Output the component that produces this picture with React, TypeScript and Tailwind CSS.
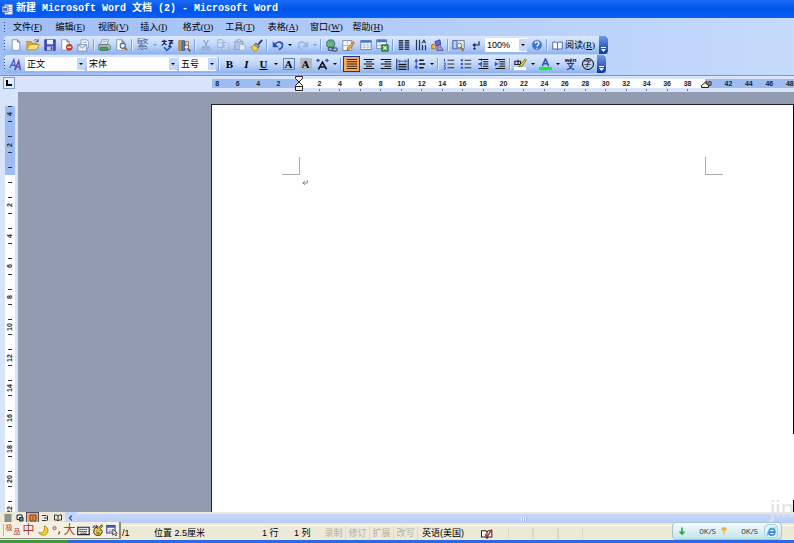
import type { ReactNode } from "react";

const MENUS = [
  ["文件", "F"],
  ["编辑", "E"],
  ["视图", "V"],
  ["插入", "I"],
  ["格式", "O"],
  ["工具", "T"],
  ["表格", "A"],
  ["窗口", "W"],
  ["帮助", "H"],
];

// One entry per two ruler units; the blank one is the margin origin.
const RULER_X = ["8", "6", "4", "2", "", ...Array.from({ length: 24 }, (_, i) => String((i + 1) * 2))];
const RULER_Y = ["4", "2", "", ...Array.from({ length: 11 }, (_, i) => String((i + 1) * 2))];

const NAVY = "#1d2f6b";

function Svg({ children, className = "size-3" }: { children: ReactNode; className?: string }) {
  return (
    <svg viewBox="0 0 16 16" className={`shrink-0 ${className}`} fill="none" aria-hidden>
      {children}
    </svg>
  );
}

function Tool({ label, active, children }: { label: string; active?: boolean; children: ReactNode }) {
  return (
    <button
      type="button"
      aria-label={label}
      className={`flex h-4 w-[17px] shrink-0 items-center justify-center ${
        active ? "border border-[#1a3a8c] bg-[#f8a860]" : ""
      }`}
    >
      {children}
    </button>
  );
}

function Drop({ label, muted }: { label: string; muted?: boolean }) {
  return (
    <button type="button" aria-label={label} className="flex h-4 w-2 shrink-0 items-center justify-center">
      <svg viewBox="0 0 4 2" className="h-[2px] w-1" aria-hidden>
        <path d="M0 0h4L2 2z" fill={muted ? "#7f97c4" : "#000"} />
      </svg>
    </button>
  );
}

function Sep() {
  return (
    <span className="flex h-3 w-1 shrink-0 justify-center">
      <span className="w-px bg-[#7e9fdc]" />
      <span className="w-px bg-[#e4eefe]" />
    </span>
  );
}

function Combo({ label, value, width }: { label: string; value: string; width: string }) {
  return (
    <label className={`relative flex h-[14px] shrink-0 px-px ${width}`}>
      <select
        aria-label={label}
        className="w-full appearance-none bg-white pl-[2px] text-[9px] leading-[14px] text-black outline-none"
      >
        <option>{value}</option>
      </select>
      <span className="pointer-events-none absolute inset-y-px right-px flex w-2 items-center justify-center bg-[#c3d8fa]">
        <svg viewBox="0 0 4 2" className="h-[2px] w-1" aria-hidden>
          <path d="M0 0h4L2 2z" fill="#000" />
        </svg>
      </span>
    </label>
  );
}

function Grip() {
  return (
    <span className="flex w-[3px] shrink-0 flex-col items-start gap-[2px]">
      <i className="size-px bg-[#27418c]" />
      <i className="size-px bg-[#27418c]" />
      <i className="size-px bg-[#27418c]" />
      <i className="size-px bg-[#27418c]" />
    </span>
  );
}

function Toolbar({ children, label }: { children: ReactNode; label: string }) {
  return (
    <div
      role="toolbar"
      aria-label={label}
      className="ml-1 flex h-[18px] w-fit items-center rounded-l-sm bg-linear-to-b from-[#dbe9fe] via-[#c0d6fa] to-[#8fb2ec]"
    >
      {children}
      <button
        type="button"
        aria-label="工具栏选项"
        className="ml-px flex h-[18px] w-[9px] items-end justify-center rounded-r-sm bg-linear-to-b from-[#6f9be8] to-[#0a379c] pb-[2px]"
      >
        <svg viewBox="0 0 5 5" className="size-[5px]" aria-hidden>
          <path d="M0 .5h5" stroke="#fff" />
          <path d="M0 2h5L2.500 5z" fill="#fff" />
        </svg>
      </button>
    </div>
  );
}

function Sheet({ x = 0, fold = true }: { x?: number; fold?: boolean }) {
  return (
    <g transform={`translate(${x} 0)`}>
      <path d="M3 1h7l3 3v11H3z" fill="#fff" stroke="#6f80a8" />
      {fold && <path d="M10 1v3h3" stroke="#3c4f86" />}
    </g>
  );
}

// Rows of horizontal rules, [x1, x2] per row from the top.
function Lines({ rows, color = "#111" }: { rows: [number, number][]; color?: string }) {
  return (
    <path
      d={rows.map(([a, b], i) => `M${a} ${2 + i * 3}H${b}`).join("")}
      stroke={color}
      strokeWidth="1.6"
    />
  );
}

function Magnifier({ color = "#4a6086" }: { color?: string }) {
  return (
    <>
      <circle cx="9" cy="9" r="3.500" fill="#dbeefc" stroke={color} strokeWidth="1.400" />
      <path d="M11.500 11.500L15 15" stroke="#a8681a" strokeWidth="2.200" />
    </>
  );
}

function Key({ k }: { k: string }) {
  return (
    <span className="font-['Liberation_Serif',serif]">
      (<u>{k}</u>)
    </span>
  );
}

function StandardBar() {
  return (
    <Toolbar label="常用">
      <Grip />
      <Tool label="新建">
        <Svg><Sheet /></Svg>
      </Tool>
      <Tool label="打开">
        <Svg className="size-[14px]">
          <path d="M1 13V4h5l1 2h6v7z" fill="#e3a92c" stroke="#b8892a" />
          <path d="M1 13.500l3-6h11l-3 6z" fill="#ffe07a" stroke="#c4962a" />
          <path d="M9 3c2-2 4-1 5 1m0-3v3h-3" stroke="#555" />
        </Svg>
      </Tool>
      <Tool label="保存">
        <Svg>
          <path d="M1 1h14v14H1z" fill="#4a4fc0" stroke="#25257c" />
          <path d="M4 1h8v6H4z" fill="#eef3ff" />
          <path d="M4 10h8v5H4z" fill="#c5cbe8" />
          <path d="M9 11h2v3H9z" fill="#25257c" />
        </Svg>
      </Tool>
      <Tool label="权限">
        <Svg>
          <Sheet x={-2} />
          <circle cx="11" cy="11" r="4" fill="#dc4426" stroke="#a32913" />
          <path d="M8.500 11h5" stroke="#fff" strokeWidth="1.800" />
        </Svg>
      </Tool>
      <Tool label="电子邮件">
        <Svg className="size-[13px]">
          <path d="M5 1h7l2 2v8H5z" fill="#fff" stroke="#8290b2" />
          <path d="M1 7h11v8H1z" fill="#e7ebf5" stroke="#7482a8" />
          <path d="M1 7l5.500 4L12 7M7 4h5" stroke="#7482a8" />
        </Svg>
      </Tool>
      <Sep />
      <Tool label="打印">
        <Svg className="size-[13px]">
          <path d="M5 1h8l-2 6H3z" fill="#fff" stroke="#7584a4" />
          <path d="M1 7h13l1 2v4H1z" fill="#b8c8c4" stroke="#4c6b68" />
          <path d="M3 10h9v4H3z" fill="#4f9e5a" stroke="#3c6c50" />
          <path d="M6 3h5M5 5h5" stroke="#9aa8c0" />
        </Svg>
      </Tool>
      <Tool label="打印预览">
        <Svg><Sheet x={-2} /><Magnifier /></Svg>
      </Tool>
      <Sep />
      <Tool label="中文简繁转换">
        <span className="text-[12px] leading-[18px] text-[#5e7396]">繁</span>
      </Tool>
      <Drop label="简繁选项" muted />
      <Tool label="拼写和语法">
        <Svg className="size-[13px]">
          <path d="M1 3h6M4 1v3c0 2-1 3-3 4M4 5c1 1 2 2 3 2M9 2h5l-3 3h4M11 5v4H9" stroke="#15205a" strokeWidth="1.500" />
          <path d="M4 10l3 4 6-5" stroke="#2d55c8" strokeWidth="2" />
        </Svg>
      </Tool>
      <Tool label="信息检索">
        <Svg className="size-[13px]">
          <path d="M1 2h3v12H1z" fill="#d8a63c" stroke="#8a6a2c" />
          <path d="M5 2h3v12H5z" fill="#5f73c6" stroke="#3d4c94" />
          <path d="M9 3h4v7H9z" fill="#f3d88a" stroke="#94763a" />
          <circle cx="10.500" cy="10" r="2.500" fill="#e8f4ff" stroke="#555f80" />
          <path d="M12.500 12L15 15" stroke="#6e4a18" strokeWidth="2" />
        </Svg>
      </Tool>
      <Sep />
      <Tool label="剪切">
        <Svg>
          <path d="M5 1l4 9M11 1L7 10" stroke="#8fa3c8" strokeWidth="1.400" />
          <circle cx="5" cy="12.500" r="2" stroke="#8fa3c8" strokeWidth="1.400" />
          <circle cx="11" cy="12.500" r="2" stroke="#8fa3c8" strokeWidth="1.400" />
        </Svg>
      </Tool>
      <Tool label="复制">
        <Svg>
          <path d="M1 1h6l2 2v8H1zM7 5h6l2 2v8H7z" fill="#d5e2f8" stroke="#8fa3c8" />
          <path d="M9 9h4M9 12h4M3 5h3" stroke="#8fa3c8" />
        </Svg>
      </Tool>
      <Tool label="粘贴">
        <Svg>
          <path d="M1 3h11v11H1z" fill="#b4c5e6" stroke="#8195bd" />
          <path d="M4 1h5v3H4z" fill="#d5e2f8" stroke="#8195bd" />
          <path d="M7 7h6l2 2v6H7z" fill="#e2ebfb" stroke="#8fa3c8" />
        </Svg>
      </Tool>
      <Tool label="格式刷">
        <Svg className="size-[13px]">
          <path d="M15 1l-5 6" stroke="#2f3f80" strokeWidth="2.500" />
          <path d="M7 5l5 4-2 2-5-4z" fill="#8d99b8" stroke="#525c80" />
          <path d="M5 7l5 4c-1 3-3 4-5 4l-4-5c2 0 3-1 4-3z" fill="#f5d435" stroke="#a38212" />
        </Svg>
      </Tool>
      <Sep />
      <Tool label="撤消">
        <Svg>
          <path d="M4 7c4-5 10-3 10 1 0 3-2 5-5 6" stroke="#2d50b8" strokeWidth="2.200" />
          <path d="M1 3v8h8z" fill="#2d50b8" />
        </Svg>
      </Tool>
      <Drop label="撤消列表" />
      <Tool label="恢复">
        <Svg>
          <path d="M12 7C8 2 2 4 2 8c0 3 2 5 5 6" stroke="#9db3dc" strokeWidth="2" />
          <path d="M15 3v8H7z" fill="#9db3dc" />
        </Svg>
      </Tool>
      <Drop label="恢复列表" muted />
      <Sep />
      <Tool label="插入超链接">
        <Svg className="size-[13px]">
          <circle cx="7" cy="6" r="5" fill="#58a9a0" stroke="#2c6670" />
          <path d="M4 3c2 0 2 2 4 2s2 3 0 4-4-1-5-2" fill="#77c04a" />
          <rect x="4" y="10" width="6" height="4" rx="2" stroke="#4a5674" strokeWidth="1.500" />
          <rect x="9" y="11" width="6" height="4" rx="2" stroke="#4a5674" strokeWidth="1.500" />
        </Svg>
      </Tool>
      <Tool label="表格和边框">
        <Svg className="size-[13px]">
          <path d="M1 2h11v12H1z" fill="#fff" stroke="#6276a8" />
          <path d="M1 8h11M6.500 2v12" stroke="#a3b2d2" />
          <path d="M14 3l-7 8-1 3 3-1 6-8z" fill="#f3b93c" stroke="#9c6316" />
        </Svg>
      </Tool>
      <Tool label="插入表格">
        <Svg>
          <path d="M1 2h14v12H1z" fill="#fff" stroke="#4a66a8" />
          <path d="M1 2h14v3H1z" fill="#4a76c8" />
          <path d="M1 8h14M1 11h14M5.500 5v9M10.500 5v9" stroke="#9fb5dc" />
        </Svg>
      </Tool>
      <Tool label="插入 Excel 工作表">
        <Svg className="size-[13px]">
          <path d="M1 1h12v11H1z" fill="#fff" stroke="#4a66a8" />
          <path d="M1 1h12v3H1z" fill="#4a76c8" />
          <path d="M1 8h7M5 4v8" stroke="#9fb5dc" />
          <path d="M7 7h8v8H7z" fill="#3d9b3f" stroke="#1f6d2a" />
          <path d="M9 9l4 4m0-4l-4 4" stroke="#fff" strokeWidth="1.500" />
        </Svg>
      </Tool>
      <Sep />
      <Tool label="分栏">
        <Svg>
          <path d="M1 2h6v12H1zM9 2h6v12H9z" fill="#7c8cae" />
          <Lines rows={[[1, 7], [1, 7], [1, 7], [1, 7], [1, 7]]} color="#26324e" />
          <Lines rows={[[9, 15], [9, 15], [9, 15], [9, 15], [9, 15]]} color="#26324e" />
        </Svg>
      </Tool>
      <Tool label="更改文字方向">
        <Svg>
          <path d="M2 1v14M6 1v14M10 8v7M14 8v7" stroke="#24345e" strokeWidth="1.600" />
          <path d="M9 6l3-5 2 5M10 4h4" stroke="#24345e" strokeWidth="1.300" />
        </Svg>
      </Tool>
      <Tool label="绘图">
        <Svg className="size-[13px]">
          <path d="M5 3l6-2 1 6-6 2z" fill="#5c74d8" stroke="#2f3f96" />
          <path d="M1 7l5-1v6H1z" fill="#f3b650" stroke="#9a6520" />
          <path d="M7 14l3-8 5 8z" fill="#a89ad8" stroke="#544a94" />
        </Svg>
      </Tool>
      <Sep />
      <Tool label="文档结构图">
        <Svg className="size-[13px]">
          <path d="M1 2h14v10H1z" fill="#f4f0c8" stroke="#4a66a8" />
          <path d="M1 2h5v10H1z" fill="#b6c9ef" stroke="#4a66a8" />
          <circle cx="9" cy="8" r="3" fill="#dbeefc" stroke="#4a6086" />
          <path d="M11 10l3 5" stroke="#a8681a" strokeWidth="2" />
        </Svg>
      </Tool>
      <Tool label="显示编辑标记">
        <Svg>
          <path d="M12 3v5H6" stroke="#1b2547" strokeWidth="1.600" />
          <path d="M7 5v6L3 8z" fill="#1b2547" />
          <path d="M6 11v3M4 13h4" stroke="#1b2547" strokeWidth="1.200" />
        </Svg>
      </Tool>
      <Combo label="显示比例" value="100%" width="w-11" />
      <Tool label="帮助">
        <Svg>
          <circle cx="8" cy="8" r="7" fill="#3c74d8" stroke="#a9c7f6" />
          <path d="M5.500 6c0-3 5-3 5 0 0 2-2.500 2-2.500 4M8 11.500v1.500" stroke="#fff" strokeWidth="1.800" />
        </Svg>
      </Tool>
      <Sep />
      <button type="button" className="flex h-4 w-[49px] items-center gap-[2px] pl-[3px] whitespace-nowrap">
        <Svg className="size-[11px]">
          <path d="M1 3h5l2 1 2-1h5v10h-5l-2 1-2-1H1zM8 4v10" fill="#f2f6ff" stroke="#4a5f92" strokeWidth="1.300" />
        </Svg>
        <span className="leading-4">
          阅读<Key k="R" />
        </span>
      </button>
    </Toolbar>
  );
}

function FormattingBar() {
  return (
    <Toolbar label="格式">
      <Grip />
      <Tool label="格式窗格">
        <Svg className="size-[13px]">
          <path d="M1 12L6 2l2 10M3 9h5" stroke="#4a63bc" strokeWidth="1.700" />
          <path d="M7 15l5-11 2 11M9 11h5" stroke="#6b4ca8" strokeWidth="2" />
        </Svg>
      </Tool>
      <Combo label="样式" value="正文" width="w-[62px]" />
      <Combo label="字体" value="宋体" width="w-[92px]" />
      <Combo label="字号" value="五号" width="w-[39px]" />
      <Sep />
      <Tool label="加粗">
        <b className="font-['Liberation_Serif',serif] text-[11px] leading-4">B</b>
      </Tool>
      <Tool label="倾斜">
        <b className="font-['Liberation_Serif',serif] text-[11px] leading-4 italic">I</b>
      </Tool>
      <Tool label="下划线">
        <b className="font-['Liberation_Serif',serif] text-[11px] leading-4 underline">U</b>
      </Tool>
      <Drop label="下划线样式" />
      <Tool label="字符边框">
        <b className="size-3 border border-[#6f84b4] text-center font-['Liberation_Serif',serif] text-[11px] leading-[10px]">A</b>
      </Tool>
      <Tool label="字符底纹">
        <b className="size-3 bg-[#b3b7bf] text-center font-['Liberation_Serif',serif] text-[11px] leading-3">A</b>
      </Tool>
      <Tool label="字符缩放">
        <Svg className="size-[13px]">
          <path d="M3 14L8 5l5 9M4 11h8" stroke="#111" strokeWidth="2" />
          <path d="M1 3h4M11 3h4M3 1L1 3l2 2M13 1l2 2-2 2" stroke="#2d55c8" strokeWidth="1.400" />
        </Svg>
      </Tool>
      <Drop label="缩放比例" />
      <Sep />
      <Tool label="两端对齐" active>
        <Svg><Lines rows={[[1, 15], [1, 15], [1, 15], [1, 15], [1, 15]]} color="#3a2508" /></Svg>
      </Tool>
      <Tool label="居中">
        <Svg><Lines rows={[[1, 15], [4, 12], [1, 15], [4, 12], [1, 15]]} /></Svg>
      </Tool>
      <Tool label="右对齐">
        <Svg><Lines rows={[[1, 15], [6, 15], [1, 15], [6, 15], [1, 15]]} /></Svg>
      </Tool>
      <Tool label="分散对齐">
        <Svg className="size-[13px]">
          <path d="M1 1v14M15 1v14" stroke={NAVY} strokeWidth="1.400" />
          <path d="M3 4h10M5 2L3 4l2 2M11 2l2 2-2 2" stroke="#2d55c8" strokeWidth="1.200" />
          <path d="M3 8h10M3 11h10M3 14h10" stroke="#111" strokeWidth="1.600" />
        </Svg>
      </Tool>
      <Tool label="行距">
        <Svg>
          <path d="M3 2v12M1 5l2-3 2 3M1 11l2 3 2-3" stroke="#2d55c8" strokeWidth="1.400" />
          <path d="M7 3h6M7 8h8M7 13h6" stroke="#111" strokeWidth="1.800" />
        </Svg>
      </Tool>
      <Drop label="行距选项" />
      <Sep />
      <Tool label="编号">
        <Svg>
          <path d="M2 1v4M1 7h2v3H1M1 12h2v3H1" stroke="#2d55c8" strokeWidth="1.300" />
          <path d="M6 3h9M6 8h9M6 13h9" stroke="#333" strokeWidth="1.400" />
        </Svg>
      </Tool>
      <Tool label="项目符号">
        <Svg>
          <path d="M1 3h3M1 8h3M1 13h3" stroke="#2d55c8" strokeWidth="2.600" />
          <path d="M6 3h9M6 8h9M6 13h9" stroke="#333" strokeWidth="1.400" />
        </Svg>
      </Tool>
      <Tool label="减少缩进量">
        <Svg>
          <Lines rows={[[2, 15], [8, 15], [8, 15], [8, 15], [2, 15]]} />
          <path d="M6 5v6L1 8z" fill="#2d55c8" />
          <path d="M6 1v14" stroke="#111" strokeDasharray="1 1" />
        </Svg>
      </Tool>
      <Tool label="增加缩进量">
        <Svg>
          <Lines rows={[[2, 15], [8, 15], [8, 15], [8, 15], [2, 15]]} />
          <path d="M1 5v6l5-3z" fill="#2d55c8" />
          <path d="M7 1v14" stroke="#111" strokeDasharray="1 1" />
        </Svg>
      </Tool>
      <Sep />
      <Tool label="突出显示">
        <Svg className="size-[13px]">
          <path d="M0 11h15v4H0z" fill="#fff" />
          <path d="M1 4h4v4H1zM5 2v6h3V4H5" stroke="#222" strokeWidth="1.300" />
          <path d="M14 1L8 8l-2 3 4-1 5-7z" fill="#f6d632" stroke="#7a6410" />
        </Svg>
      </Tool>
      <Drop label="突出显示颜色" />
      <Tool label="字体颜色">
        <Svg className="size-[13px]">
          <path d="M4 10L8 1l4 9M5 7h6" stroke="#3553a8" strokeWidth="1.900" />
          <path d="M0 11h16v4H0z" fill="#12f02c" />
        </Svg>
      </Tool>
      <Drop label="字体颜色选项" />
      <Tool label="拼音指南">
        <span className="flex flex-col items-center text-[8px] leading-[7px]">
          <span className="text-[6px] leading-[5px] font-bold">wén</span>
          <b className="text-[#1f3a8e]">文</b>
        </span>
      </Tool>
      <Tool label="带圈字符">
        <span className="size-3 rounded-full border border-black text-center text-[8px] leading-[10px]">字</span>
      </Tool>
    </Toolbar>
  );
}

function HorizontalRuler() {
  return (
    <div className="flex h-[17px] shrink-0 overflow-hidden border-t border-[#8b93a5] bg-[#d8e4fa]">
      <div className="w-[207px] shrink-0 pt-px pl-[3px]">
        <button
          type="button"
          aria-label="制表符"
          className="flex size-3 items-center justify-center border border-[#7f9bd4] bg-[#e6eefc]"
        >
          <Svg className="size-2">
            <path d="M4 2v10h10" stroke="#000" strokeWidth="4" />
          </Svg>
        </button>
      </div>
      <div className="relative min-w-0 flex-1 pt-[3px]">
        <div className="h-[9px] overflow-hidden bg-[linear-gradient(to_right,transparent_5px,#9dbdf2_5px,#9dbdf2_92px,#fff_92px,#fff_498px,#9dbdf2_498px)]">
          <div className="grid w-[593px] grid-cols-[repeat(29,1fr)] text-center font-['Liberation_Sans',sans-serif] text-[7px] leading-[9px] font-bold text-[#222]">
            {RULER_X.map((n, i) => (
              <span key={i}>{n}</span>
            ))}
          </div>
        </div>
        <div className="grid w-[593px] grid-cols-[repeat(29,1fr)] justify-items-center">
          {RULER_X.map((n, i) => (
            <i key={i} className={`mt-px h-[2px] w-px ${i > 4 && i < 24 ? "bg-[#6b7690]" : ""}`} />
          ))}
        </div>
        {/* Indent markers */}
        <svg viewBox="0 0 8 16" className="absolute top-0 left-[88px] h-4 w-2" aria-hidden>
          <path d="M.5.5h7v2L4 6 .5 2.500zM.5 10.500v-1L4 6l3.500 3.500v1zM.5 10.500h7v4h-7z" fill="#f4f1e4" stroke="#222" />
        </svg>
        <svg viewBox="0 0 8 6" className="absolute top-[6px] left-[494px] h-[6px] w-2" aria-hidden>
          <path d="M.5 5.500v-2L4 .5l3.500 3v2z" fill="#f4f1e4" stroke="#222" />
        </svg>
      </div>
    </div>
  );
}

function VerticalRuler() {
  return (
    <div className="w-[18px] shrink-0 overflow-hidden bg-[#d8e4fa] pt-[14px] pl-[5px]">
      <div className="h-full w-[10px] overflow-hidden bg-[linear-gradient(#9dbdf2_69px,#fff_69px)]">
        <div className="-mt-[7px] flex h-[426px] flex-col">
          {RULER_Y.map((n, i) => (
            <div key={i} className="flex flex-1 flex-col items-center justify-between py-[7px]">
              <i className="h-px w-1 shrink-0 bg-[#333]" />
              <span className="flex h-[10px] rotate-180 items-center justify-center font-['Liberation_Sans',sans-serif] text-[7px] leading-[10px] font-bold text-[#222] [writing-mode:vertical-rl]">
                <span>{n}</span>
              </span>
              <i className="h-px w-1 shrink-0 bg-[#333]" />
            </div>
          ))}
        </div>
      </div>
    </div>
  );
}

function Page() {
  return (
    <main className="relative flex min-w-0 flex-1 overflow-hidden bg-[#929bb0] pt-3 pl-[193px]">
      <article className="flex-1 border-t border-l border-[#20242e] bg-white pt-[52px] pl-[70px]">
        <div className="flex">
          <span className="size-[18px] shrink-0 border-r border-b border-[#aaa]" />
          <span className="ml-[405px] size-[18px] shrink-0 border-b border-l border-[#aaa]" />
        </div>
        <p className="pt-[5px] pl-5">
          <Svg className="size-[6px]">
            <path d="M14 0v8H3M8 3L2 8l6 5" stroke="#555" strokeWidth="1.800" />
          </Svg>
        </p>
      </article>
      <span className="absolute top-[13px] right-0 h-[329px] w-px bg-black" />
      <span className="absolute right-0 bottom-0 h-3 w-px bg-black" />
    </main>
  );
}

function ViewBar() {
  return (
    <div className="relative flex h-[14px] shrink-0 items-start border-b border-[#fbfaf4] bg-[#ece9d8] pl-px">
      <button type="button" aria-label="普通视图" className="flex h-3 w-[13px] items-center justify-center">
        <Svg className="size-2">
          <path d="M1 2h14M1 6h14M1 10h14M1 14h14" stroke="#222" strokeWidth="1.800" />
        </Svg>
      </button>
      <button type="button" aria-label="Web 版式视图" className="flex h-3 w-3 items-center justify-center">
        <Svg className="size-2">
          <path d="M2 2h10v9H2z" fill="#fff" stroke="#222" strokeWidth="2" />
          <path d="M7 7h7v7H7z" fill="#789" stroke="#222" strokeWidth="2" />
        </Svg>
      </button>
      <button
        type="button"
        aria-label="页面视图"
        className="flex h-3 w-[13px] items-center justify-center border border-[#5a4a6c] bg-[#f8a860]"
      >
        <Svg className="size-2">
          <path d="M2 2h12v12H2zM5 6h6M5 10h6" stroke="#4c2e10" strokeWidth="1.800" />
        </Svg>
      </button>
      <button type="button" aria-label="大纲视图" className="flex h-3 w-3 items-center justify-center">
        <Svg className="size-2">
          <path d="M2 3h9M6 8h8M2 13h9M13 3v10" stroke="#222" strokeWidth="1.800" />
        </Svg>
      </button>
      <button type="button" aria-label="阅读版式" className="flex h-3 w-[13px] items-center justify-center">
        <Svg className="size-2">
          <path d="M1 2h5l2 2 2-2h5v10h-5l-2 2-2-2H1zM8 4v10" stroke="#222" strokeWidth="1.800" />
        </Svg>
      </button>
      <button type="button" aria-label="向左滚动" className="ml-px flex h-[11px] w-3 items-center justify-center bg-[#c6d6fc]">
        <Svg className="size-2">
          <path d="M10 3L5 8l5 5" stroke="#3c558c" strokeWidth="2.500" />
        </Svg>
      </button>
      <div className="mt-[2px] flex h-[9px] flex-1 items-center bg-linear-to-b from-[#c9d7fd] to-[#b9cbf8] pl-[444px]">
        <span className="h-1 w-[6px] bg-[repeating-linear-gradient(to_right,#eef4fe_0,#eef4fe_1px,#a6bbee_1px,#a6bbee_2px)]" />
      </div>
      <span className="pointer-events-none absolute right-0 bottom-0 font-['Liberation_Sans',sans-serif] text-[24px] leading-8 text-[#dfe1e8]">
        jin
      </span>
    </div>
  );
}

function StatusBar() {
  return (
    <footer className="flex h-[14px] shrink-0 items-center bg-[#ece9d8] pl-[122px] text-[9px] leading-[14px] whitespace-nowrap text-black">
      <span className="w-8">/1</span>
      <span className="w-[108px]">位置 2.5厘米</span>
      <span className="w-8">1 行</span>
      <span className="w-7">1 列</span>
      {["录制", "修订", "扩展", "改写"].map((s) => (
        <button key={s} type="button" className="w-6 border-r border-[#dcd8c6] text-center text-[#b4b09c]">
          {s}
        </button>
      ))}
      <span className="w-[58px] pl-1">英语(美国)</span>
      <span className="flex w-8 items-center pl-1">
        <Svg className="h-[11px] w-[14px]">
          <path d="M0 4h6l2 2 2-2h5v9h-5l-2 2-2-2H0zM8 6v8" fill="#fff" stroke="#222" strokeWidth="1.500" />
          <path d="M5 9l3 4 7-11" stroke="#c0281c" strokeWidth="2" />
        </Svg>
      </span>
      {[0, 1, 2].map((i) => (
        <span key={i} className="h-[11px] w-[25px] border-r border-l border-[#dcd8c6]" />
      ))}
    </footer>
  );
}

function ImeBar() {
  return (
    <div className="absolute bottom-1 left-0 flex h-[17px] w-[121px] items-center border-r-2 border-b border-[#8e8b80] bg-[#f3f0e4] pl-[3px] text-[#b03a2c]">
      <span className="h-3 w-px bg-[#bdb9a8]" />
      <span className="flex w-[18px] justify-center gap-px text-[7px] leading-[8px]">
        <span className="pb-1">极</span>
        <span className="pt-1">品</span>
      </span>
      <button type="button" className="w-[13px] text-[12px] leading-4">中</button>
      <button type="button" aria-label="半角" className="flex w-4 justify-center">
        <Svg className="size-[11px]">
          <path d="M9 1c8 3 7 13-1 14-3 0-6-2-7-4 6 2 10-3 8-10z" fill="#f7d21e" stroke="#8a7012" />
        </Svg>
      </button>
      <button type="button" aria-label="中文标点" className="flex w-3 justify-center">
        <Svg className="size-[10px]">
          <circle cx="4" cy="5" r="2.500" stroke="#b03a2c" strokeWidth="1.500" />
          <path d="M12 10v2l-2 3" stroke="#b03a2c" strokeWidth="2" />
        </Svg>
      </button>
      <button type="button" className="w-[13px] text-[12px] leading-4">大</button>
      <button type="button" aria-label="软键盘" className="flex w-[15px] justify-center">
        <Svg className="h-[13px] w-[13px]">
          <path d="M1 4h14v9H1z" fill="#fff" stroke="#222" strokeWidth="1.500" />
          <path d="M3 6.500h10M3 9h10" stroke="#222" strokeWidth="1.500" strokeDasharray="1.500 1" />
          <path d="M4 11.200h8" stroke="#222" />
        </Svg>
      </button>
      <button type="button" aria-label="皮肤" className="flex w-[14px] justify-center">
        <Svg className="size-3">
          <path d="M3 7l2-3 3 2 5-5 1 2-3 3 3 4-3 5H5l-3-4z" fill="#f0d04a" stroke="#3a3110" strokeWidth="1.300" />
          <path d="M5 2l3 2M6 9h1M10 9h1M6 12h4" stroke="#222" strokeWidth="1.600" />
          <path d="M1 5l3-3" stroke="#3c558c" strokeWidth="2" />
        </Svg>
      </button>
      <button type="button" aria-label="输入法菜单" className="flex w-[14px] justify-center">
        <Svg className="size-3">
          <path d="M1 2h11v10H1z" fill="#fff" stroke="#33418e" strokeWidth="1.500" />
          <path d="M1 2h11v3H1z" fill="#4457b8" />
          <path d="M3 8h6M3 10h5" stroke="#7a84b8" />
          <path d="M9 7v8l2-2 2 3 1-1-1-3h2z" fill="#fff" stroke="#222" />
        </Svg>
      </button>
    </div>
  );
}

function SpeedMeter() {
  return (
    <div className="absolute right-[12px] bottom-[3px] flex h-[18px] w-[110px] items-center rounded-sm border border-[#a8c4cc] bg-linear-to-b from-[#f6fcfc] to-[#c2e4ea] pl-[5px] font-['Open_Sans',sans-serif] text-[8px] leading-4 text-[#333]">
      <Svg className="size-2">
        <path d="M8 1v12M3 9l5 5 5-5" stroke="#1fa53a" strokeWidth="3" />
      </Svg>
      <span className="w-[30px] text-right">0K/S</span>
      <span className="w-[13px] pl-1">
        <Svg className="size-2">
          <path d="M8 15V4M3 7l5-5 5 5M3 2h10" stroke="#eeb025" strokeWidth="2.500" />
        </Svg>
      </span>
      <span className="w-[29px] text-right">0K/S</span>
      <button
        type="button"
        aria-label="浏览器"
        className="ml-[6px] flex size-[14px] items-center justify-center rounded-sm border border-[#a9d2e6] bg-[#dff3fb]"
      >
        <Svg className="size-[11px]">
          <path d="M4 9h9c0-7-9-7-9 0 0 5 6 6 9 2" stroke="#2f8bd4" strokeWidth="2.400" />
          <path d="M2 14c-3-3 6-12 12-11" stroke="#5cb0e8" strokeWidth="1.500" />
        </Svg>
      </button>
    </div>
  );
}

export default function App() {
  return (
    <div className="relative flex h-screen flex-col overflow-hidden bg-[#ece9d8] font-['Liberation_Sans','Noto_Sans_CJK_SC',sans-serif] text-[9px] text-black">
      <header className="flex h-[18px] shrink-0 items-center gap-[3px] bg-linear-to-b from-[#1a6cf6] via-[#0053e6] to-[#0a5ff8] pl-[2px]">
        <Svg className="size-[11px]">
          <path d="M4 1h11v14H4z" fill="#fff" stroke="#98a8d0" />
          <path d="M10 5h4M10 8h4M10 11h4" stroke="#6f83b8" />
          <path d="M0 3h9v9H0z" fill="#dbe6fb" stroke="#2b4fa8" />
          <path d="M2 5l1 5 1.500-4L6 10l1-5" stroke="#2044a0" strokeWidth="1.300" />
        </Svg>
        <h1 className="font-['Liberation_Mono','Noto_Sans_CJK_SC',monospace] text-[10px] leading-5 font-bold whitespace-nowrap text-white">
          新建 Microsoft Word 文档 (2) - Microsoft Word
        </h1>
      </header>

      <div className="shrink-0 bg-linear-to-r from-[#9fbef5] to-[#c6dafb] pb-[2px]">
        <nav className="flex h-[18px] items-center pl-1">
          <Grip />
          <div className="ml-[6px] grid w-[382px] grid-cols-9">
            {MENUS.map(([name, key]) => (
              <button key={key} type="button" className="text-left leading-4 whitespace-nowrap">
                {name}
                <Key k={key} />
              </button>
            ))}
          </div>
        </nav>
        <div className="flex flex-col gap-px">
          <StandardBar />
          <FormattingBar />
        </div>
      </div>

      <HorizontalRuler />
      <div className="flex min-h-0 flex-1">
        <VerticalRuler />
        <Page />
      </div>
      <ViewBar />
      <StatusBar />
      <div className="h-[3px] shrink-0 bg-linear-to-r from-[#3c9a3c] from-[67px] to-[#2a6be4] to-[69px]" />

      <ImeBar />
      <SpeedMeter />
    </div>
  );
}
